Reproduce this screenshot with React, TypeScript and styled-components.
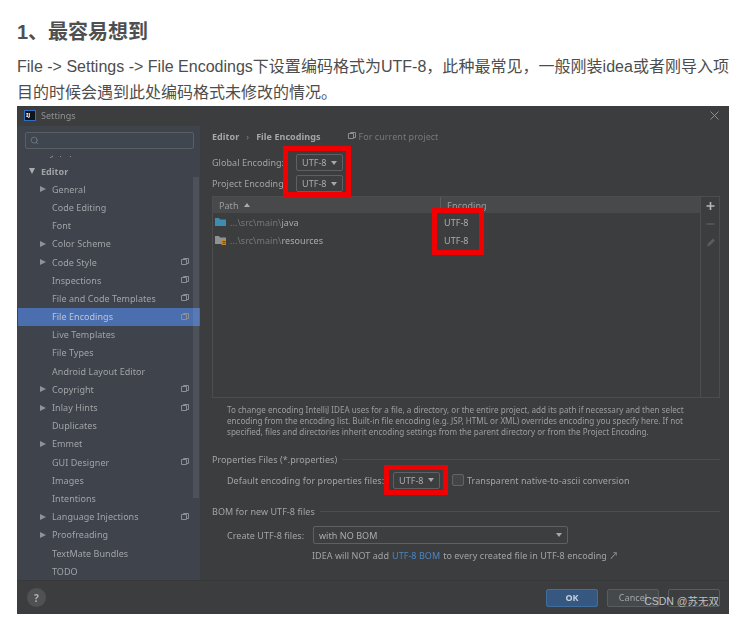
import styled, { createGlobalStyle } from 'styled-components';
import { Search } from 'lucide-react';

const GlobalStyle = createGlobalStyle`
  html, body { margin: 0; padding: 0; background: #fff; }
  body { font-family: "Liberation Sans", "Noto Sans CJK SC", sans-serif; overflow: hidden; }
`;

const Page = styled.div`
  width: 740px;
  height: 620px;
  padding: 20px 11px 0 17px;
  box-sizing: border-box;
  position: relative;
  overflow: hidden;
`;

const Heading = styled.h2`
  margin: 0 0 9px;
  font-size: 20px;
  line-height: 25px;
  font-weight: 700;
  color: #4f4f4f;
  font-family: "Liberation Sans", "Noto Sans CJK SC", sans-serif;
`;

const Paragraph = styled.p`
  margin: 0;
  font-size: 16px;
  line-height: 26px;
  color: #4d4d4d;
  text-align: justify;
`;

const Dialog = styled.div`
  width: 712px;
  height: 508px;
  background: #3c3d3f;
  position: relative;
  display: flex;
  flex-direction: column;
  color: #a1a4a6;
  font-family: "Noto Sans", "Noto Sans CJK SC", sans-serif;
  font-size: 9px;
  letter-spacing: 0.05px;
  filter: blur(0.35px);
`;

const TitleBar = styled.div`
  height: 20px;
  display: flex;
  align-items: center;
  padding: 0 10px 2px 7px;
  gap: 5px;
  box-sizing: border-box;
  font-size: 9px;
  color: #8f9293;
  flex: none;
`;

const TitleLogo = styled.span`
  width: 12px;
  height: 11px;
  background: #10131a;
  border: 1px solid #2e6fc0;
  box-sizing: border-box;
  color: #fff;
  font-size: 6px;
  font-weight: 700;
  line-height: 8px;
  padding-left: 1px;
  letter-spacing: 0;
`;

const TitleText = styled.span`
  flex: 1;
`;

const CloseIcon = styled.svg`
  width: 9px;
  height: 9px;
  stroke: #8b8e90;
  stroke-width: 1;
  fill: none;
`;

const Main = styled.div`
  flex: 1;
  display: flex;
  min-height: 0;
`;

const Sidebar = styled.aside`
  width: 183px;
  background: #3e434c;
  flex: none;
  padding-top: 6px;
  position: relative;
  overflow: hidden;
`;

const SearchBox = styled.div`
  margin: 0 6px 0 8px;
  height: 17px;
  background: #3f4650;
  border: 1px solid #5a5f62;
  border-radius: 2px;
  box-sizing: border-box;
  display: flex;
  align-items: center;
  padding-left: 4px;
  color: #8c9093;
`;

const ClippedRowMarks = styled.svg`
  display: block;
  width: 40px;
  height: 3px;
  margin: 6px 0 4px 33px;
`;

const TreeRow = styled.div<{ $depth: number; $selected?: boolean }>`
  height: 18.2px;
  display: flex;
  align-items: center;
  padding-left: ${(p) => (p.$depth === 0 ? 11 : 22)}px;
  padding-right: 11px;
  margin-left: 1px;
  background: ${(p) => (p.$selected ? '#4b6eaf' : 'transparent')};
  color: ${(p) => (p.$selected ? '#bcc5d8' : '#a1a4a7')};
  font-weight: ${(p) => (p.$depth === 0 ? 700 : 400)};
  white-space: nowrap;
`;

const Caret = styled.span<{ $open?: boolean }>`
  width: 12px;
  flex: none;
  display: flex;

  &::before {
    content: '';
    border-style: solid;
    border-color: transparent;
    ${(p) =>
      p.$open
        ? 'border-width: 6px 3.5px 0; border-top-color: #a9acae;'
        : 'border-width: 3.5px 0 3.5px 6px; border-left-color: #8f9296;'}
  }
`;

const CaretSpace = styled.span`
  width: 12px;
  flex: none;
`;

const TreeLabel = styled.span`
  flex: 1;
`;

const ScrollThumb = styled.div`
  position: absolute;
  right: 1px;
  top: 51px;
  bottom: 82px;
  width: 6px;
  background: rgba(255, 255, 255, 0.08);
`;

const ProjectIcon = styled.svg`
  width: 8px;
  height: 8px;
  fill: none;
  stroke: #8b8f93;
  stroke-width: 1;
  flex: none;
`;

const Content = styled.section`
  flex: 1;
  display: flex;
  flex-direction: column;
  padding: 3px 9px 0 12px;
  min-width: 0;
`;

const Breadcrumb = styled.div`
  display: flex;
  align-items: center;
  height: 14px;
  font-weight: 700;
  color: #a4a7a9;
`;

const CrumbSep = styled.span`
  margin: 0 7px;
  font-weight: 400;
  color: #808385;
`;

const CurrentProject = styled.span`
  margin-left: 28px;
  display: flex;
  align-items: center;
  gap: 2px;
  font-weight: 400;
  color: #76797b;
`;

const EncodingRow = styled.div<{ $first?: boolean }>`
  display: flex;
  align-items: center;
  height: 17px;
  margin-top: ${(p) => (p.$first ? 11 : 4)}px;
  gap: 3px;
`;

const FieldLabel = styled.span`
  width: 81px;
  white-space: nowrap;
  overflow: hidden;
  flex: none;
`;

const Combo = styled.div<{ $wide?: boolean }>`
  height: ${(p) => (p.$wide ? 18 : 17)}px;
  width: ${(p) => (p.$wide ? 255 : 47)}px;
  box-sizing: border-box;
  border: 1px solid #5e6163;
  border-radius: 2px;
  display: flex;
  align-items: center;
  justify-content: space-between;
  padding: 0 5px;
  background: #3c3e40;
  color: #aaadaf;
  flex: none;

  &::after {
    content: '';
    border-style: solid;
    border-width: 4px 3.5px 0;
    border-color: #a5a8aa transparent transparent;
  }
`;

const TableWrap = styled.div`
  display: flex;
  height: 202px;
  margin-top: 4px;
  border: 1px solid #4b4d4f;
  box-sizing: border-box;
  flex: none;
`;

const Table = styled.div`
  flex: 1;
  display: flex;
  flex-direction: column;
  border-right: 1px solid #4b4d4f;
`;

const TableHead = styled.div`
  display: grid;
  grid-template-columns: 227px 1fr;
  height: 16px;
  background: #47494b;
  align-items: center;
  color: #9b9ea0;
`;

const HeadCell = styled.div`
  padding-left: 6px;
  height: 100%;
  display: flex;
  align-items: center;
  gap: 5px;

  & + & {
    border-left: 1px solid #5a5c5e;
  }
`;

const SortArrow = styled.span`
  border-style: solid;
  border-width: 0 3.5px 4px;
  border-color: transparent transparent #a9acae;
`;

const TableRow = styled.div`
  display: grid;
  grid-template-columns: 227px 1fr;
  height: 18.2px;
  align-items: center;
`;

const PathCell = styled.div`
  display: flex;
  align-items: center;
  padding-left: 2px;
  gap: 4px;
  color: #76797b;
`;

const PathStrong = styled.span`
  color: #a9acae;
`;

const EncodingCell = styled.div`
  padding-left: 4px;
  color: #aaadaf;
`;

const FolderIcon = styled.svg`
  width: 11px;
  height: 10px;
  flex: none;
`;

const SideTools = styled.div`
  width: 18px;
  display: flex;
  flex-direction: column;
  align-items: center;
  padding-top: 3px;
  gap: 6px;
  flex: none;
`;

const ToolIcon = styled.svg`
  width: 11px;
  height: 12px;
`;

const HelpText = styled.p`
  margin: 6px 0 0 15px;
  line-height: 11px;
  font-size: 8.1px;
  letter-spacing: 0;
  color: #9b9ea0;
  width: 472px;
`;

const GroupTitle = styled.div`
  display: flex;
  align-items: center;
  gap: 5px;
  height: 14px;
  margin-top: 15px;
  white-space: nowrap;

  &::after {
    content: '';
    flex: 1;
    height: 1px;
    background: #4b4d4f;
  }
`;

const GroupRow = styled.div<{ $top: number }>`
  display: flex;
  align-items: center;
  height: 18px;
  margin: ${(p) => p.$top}px 0 0 15px;
  white-space: nowrap;
`;

const RowLabel = styled.span<{ $width: number }>`
  width: ${(p) => p.$width}px;
  flex: none;
`;

const Checkbox = styled.span`
  width: 12px;
  height: 12px;
  box-sizing: border-box;
  border: 1px solid #626567;
  border-radius: 2px;
  margin: 0 3px 0 12px;
  background: #434547;
  flex: none;
`;

const BomNote = styled.div`
  margin: 4px 0 0 100px;
  height: 14px;
  display: flex;
  align-items: center;
  gap: 3px;
  white-space: nowrap;
`;

const BlueLink = styled.span`
  color: #4a85c4;
`;

const Footer = styled.footer`
  height: 34px;
  flex: none;
  display: flex;
  align-items: center;
  padding: 0 9px 0 10px;
  gap: 9px;
  border-top: 1px solid #37383a;
  box-sizing: border-box;
`;

const HelpButton = styled.span`
  width: 19px;
  height: 19px;
  border-radius: 50%;
  background: #4f5153;
  display: flex;
  align-items: center;
  justify-content: center;
  color: #b0b3b5;
  font-size: 10px;
  font-weight: 700;
  margin-right: auto;
`;

const DialogButton = styled.button<{ $primary?: boolean; $bare?: boolean }>`
  width: 52px;
  height: 18px;
  padding: 0;
  border-radius: 2px;
  font-family: inherit;
  font-size: 9px;
  letter-spacing: 0.05px;
  border: 1px solid ${(p) => (p.$primary ? '#3f6f9f' : '#5a5d5f')};
  background: ${(p) => (p.$primary ? '#365880' : p.$bare ? 'transparent' : '#46494b')};
  color: ${(p) => (p.$primary ? '#c5d0dc' : '#a4a7a9')};
  font-weight: ${(p) => (p.$primary ? 700 : 400)};
`;

const RedBox = styled.div<{ $x: number; $y: number; $w: number; $h: number }>`
  position: absolute;
  left: ${(p) => p.$x}px;
  top: ${(p) => p.$y}px;
  width: ${(p) => p.$w}px;
  height: ${(p) => p.$h}px;
  border: 5px solid #f00000;
  box-sizing: border-box;
  pointer-events: none;
`;

const Watermark = styled.span`
  position: absolute;
  right: 21px;
  bottom: 12px;
  font-size: 10.5px;
  line-height: 14px;
  color: #bfc0c1;
  font-family: "Liberation Sans", "Noto Sans CJK SC", sans-serif;
  white-space: nowrap;
`;

type TreeItem = { label: string; caret?: boolean; project?: boolean; selected?: boolean };

const treeItems: TreeItem[] = [
  { label: 'General', caret: true },
  { label: 'Code Editing' },
  { label: 'Font' },
  { label: 'Color Scheme', caret: true },
  { label: 'Code Style', caret: true, project: true },
  { label: 'Inspections', project: true },
  { label: 'File and Code Templates', project: true },
  { label: 'File Encodings', project: true, selected: true },
  { label: 'Live Templates' },
  { label: 'File Types' },
  { label: 'Android Layout Editor' },
  { label: 'Copyright', caret: true, project: true },
  { label: 'Inlay Hints', caret: true, project: true },
  { label: 'Duplicates' },
  { label: 'Emmet', caret: true },
  { label: 'GUI Designer', project: true },
  { label: 'Images' },
  { label: 'Intentions' },
  { label: 'Language Injections', caret: true, project: true },
  { label: 'Proofreading', caret: true },
  { label: 'TextMate Bundles' },
  { label: 'TODO' },
];

function Project() {
  return (
    <ProjectIcon viewBox="0 0 8 8">
      <path d="M0.5 1.5h5v5h-5z M2.5 1.5v-1h5v5h-2" />
    </ProjectIcon>
  );
}

export default function App() {
  return (
    <>
      <GlobalStyle />
      <Page>
        <Heading>1、最容易想到</Heading>
        <Paragraph>
          File -&gt; Settings -&gt; File Encodings下设置编码格式为UTF-8，此种最常见，一般刚装idea或者刚导入项目的时候会遇到此处编码格式未修改的情况。
        </Paragraph>
        <Dialog>
          <TitleBar>
            <TitleLogo>IJ</TitleLogo>
            <TitleText>Settings</TitleText>
            <CloseIcon viewBox="0 0 9 9">
              <path d="M0.5 0.5l8 8M8.5 0.5l-8 8" />
            </CloseIcon>
          </TitleBar>
          <Main>
            <Sidebar>
              <SearchBox>
                <Search size={9} strokeWidth={1.5} />
              </SearchBox>
              {/* descenders of the row scrolled out of view */}
              <ClippedRowMarks viewBox="0 0 40 3">
                <path d="M0 3l3-2M10 1.5h1M20 1.5h1" stroke="#8f9296" fill="none" />
              </ClippedRowMarks>
              <TreeRow $depth={0}>
                <Caret $open />
                <TreeLabel>Editor</TreeLabel>
              </TreeRow>
              {treeItems.map((item) => (
                <TreeRow key={item.label} $depth={1} $selected={item.selected}>
                  {item.caret ? <Caret /> : <CaretSpace />}
                  <TreeLabel>{item.label}</TreeLabel>
                  {item.project && <Project />}
                </TreeRow>
              ))}
              <ScrollThumb />
            </Sidebar>
            <Content>
              <Breadcrumb>
                Editor
                <CrumbSep>›</CrumbSep>
                File Encodings
                <CurrentProject>
                  <Project />
                  For current project
                </CurrentProject>
              </Breadcrumb>
              <EncodingRow $first>
                <FieldLabel>Global Encoding:</FieldLabel>
                <Combo>UTF-8</Combo>
              </EncodingRow>
              <EncodingRow>
                <FieldLabel>Project Encoding:</FieldLabel>
                <Combo>UTF-8</Combo>
              </EncodingRow>
              <TableWrap>
                <Table>
                  <TableHead>
                    <HeadCell>
                      Path <SortArrow />
                    </HeadCell>
                    <HeadCell>Encoding</HeadCell>
                  </TableHead>
                  <TableRow>
                    <PathCell>
                      <FolderIcon viewBox="0 0 11 10">
                        <path d="M0 1h4l1 1.5h6V9H0z" fill="#3f8cb3" />
                      </FolderIcon>
                      <span>
                        ...\src\main\<PathStrong>java</PathStrong>
                      </span>
                    </PathCell>
                    <EncodingCell>UTF-8</EncodingCell>
                  </TableRow>
                  <TableRow>
                    <PathCell>
                      <FolderIcon viewBox="0 0 11 10">
                        <path d="M0 1h4l1 1.5h6V9H0z" fill="#8f9294" />
                        <path d="M6.5 5h4.5v5H6.5z" fill="#c58a2a" />
                        <path d="M7.5 6.5h3M7.5 8.3h3" stroke="#3c3d3f" strokeWidth="0.8" />
                      </FolderIcon>
                      <span>
                        ...\src\main\<PathStrong>resources</PathStrong>
                      </span>
                    </PathCell>
                    <EncodingCell>UTF-8</EncodingCell>
                  </TableRow>
                </Table>
                <SideTools>
                  <ToolIcon viewBox="0 0 11 12">
                    <path d="M5.5 2v8M1.5 6h8" stroke="#b5b8ba" strokeWidth="1.6" />
                  </ToolIcon>
                  <ToolIcon viewBox="0 0 11 12">
                    <path d="M1.5 6h8" stroke="#555759" strokeWidth="1.6" />
                  </ToolIcon>
                  <ToolIcon viewBox="0 0 11 12">
                    <path d="M2 10.5l1-3 5-5 2 2-5 5z" fill="#5a5c5e" />
                  </ToolIcon>
                </SideTools>
              </TableWrap>
              <HelpText>
                To change encoding IntelliJ IDEA uses for a file, a directory, or the entire project, add its path if necessary and then select encoding from the encoding list. Built-in file encoding (e.g. JSP, HTML or XML) overrides encoding you specify here. If not specified, files and directories inherit encoding settings from the parent directory or from the Project Encoding.
              </HelpText>
              <GroupTitle>Properties Files (*.properties)</GroupTitle>
              <GroupRow $top={5}>
                <RowLabel $width={166}>Default encoding for properties files:</RowLabel>
                <Combo>UTF-8</Combo>
                <Checkbox />
                <span>Transparent native-to-ascii conversion</span>
              </GroupRow>
              <GroupTitle>BOM for new UTF-8 files</GroupTitle>
              <GroupRow $top={8}>
                <RowLabel $width={86}>Create UTF-8 files:</RowLabel>
                <Combo $wide>with NO BOM</Combo>
              </GroupRow>
              <BomNote>
                IDEA will NOT add <BlueLink>UTF-8 BOM</BlueLink> to every created file in UTF-8 encoding ↗
              </BomNote>
            </Content>
          </Main>
          <Footer>
            <HelpButton>?</HelpButton>
            <DialogButton $primary>OK</DialogButton>
            <DialogButton>Cancel</DialogButton>
            <DialogButton $bare />
          </Footer>
          <RedBox $x={266} $y={40} $w={68} $h={51} />
          <RedBox $x={415} $y={102} $w={52} $h={47} />
          <RedBox $x={367} $y={359} $w={64} $h={30} />
        </Dialog>
        <Watermark>CSDN @苏无双</Watermark>
      </Page>
    </>
  );
}
